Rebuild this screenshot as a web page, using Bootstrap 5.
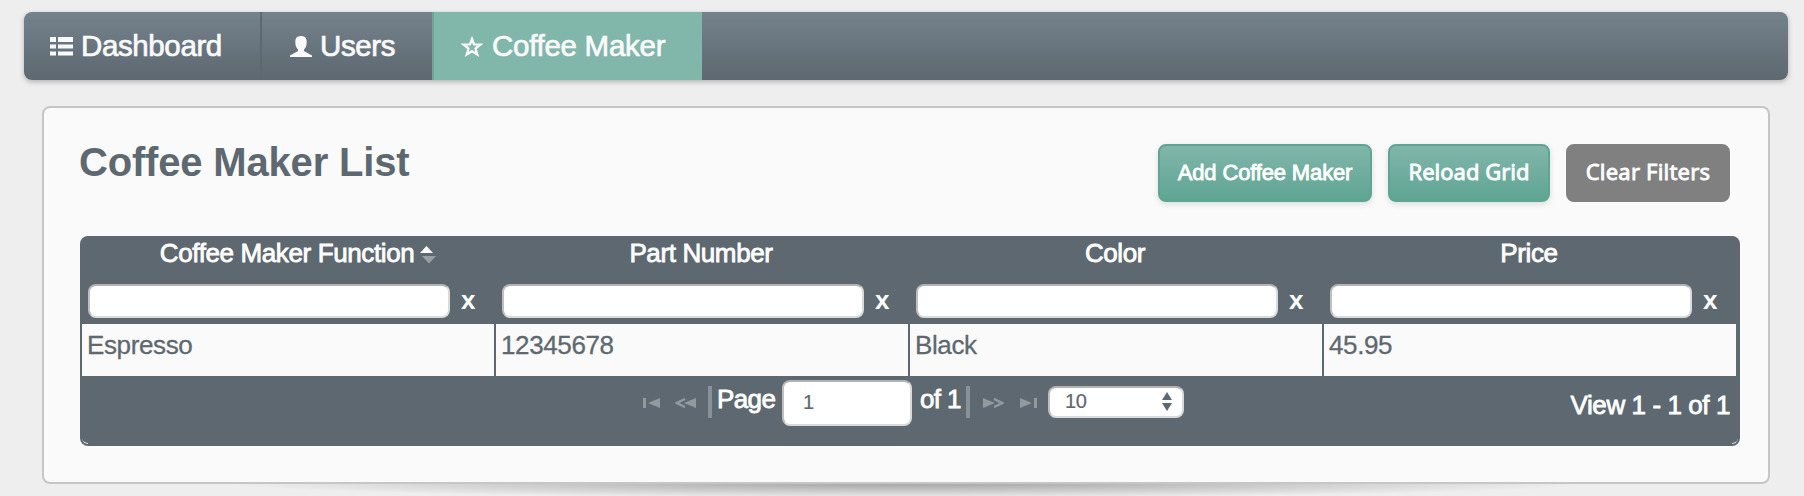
<!DOCTYPE html>
<html lang="en">
<head>
<meta charset="utf-8">
<title>Coffee Maker List</title>
<link href="https://cdn.jsdelivr.net/npm/bootstrap@5.3.0/dist/css/bootstrap.min.css" rel="stylesheet">
<script src="https://cdn.jsdelivr.net/npm/bootstrap@5.3.0/dist/js/bootstrap.bundle.min.js"></script>
<style>
html,body{height:496px;overflow:hidden}
body{background:#eee;font-family:"Liberation Sans",Arial,sans-serif;color:#5d6870;padding:12px 16px 0 24px}
.topbar{height:68px;border-radius:8px;background:linear-gradient(#74828c,#5d6870);box-shadow:0 2px 5px rgba(0,0,0,.25);overflow:hidden;padding:0}
.topbar .nav-link{height:68px;color:#fafafa;font-size:29.5px;letter-spacing:-.38px;line-height:66px;padding:0 0 0 26px;border-right:2px solid #5d6870;-webkit-text-stroke:.7px #fafafa;white-space:nowrap}
.topbar .nav-link svg{margin-right:8px;flex:none}
.topbar .nav-link.w-users{width:170px;padding-left:28px;border-right:0}
.topbar .nav-link.active{background:#81b6aa;border-right:0;border-left:2px solid #70a698;padding-left:27px;letter-spacing:-.28px}
.topbar .nav-link.active svg{margin-right:9px}
.w-dash{width:238px}.w-coffee{width:270px}
.panel{margin:26px 18px 0;height:378px;border:2px solid #c6c6c6;border-radius:8px;background:#fafafa;padding:36px 28px 0 36px}
.panel-wrap{position:relative}
.panel-wrap::after{content:"";position:absolute;z-index:-1;left:200px;right:200px;bottom:-14px;height:30px;background:radial-gradient(closest-side,rgba(0,0,0,.32),rgba(0,0,0,.16) 50%,transparent)}
.panel-title{font-size:40px;font-weight:700;letter-spacing:-.18px;line-height:44px;margin:-4px 0 0 -1px;color:#5d6870}
.actions{margin-right:10px;gap:16px}
.action{height:58px;border-radius:8px;border:2px solid #5fa594;color:#fff;background:linear-gradient(#81b6aa,#5fa594);font-size:22px;line-height:54px;padding:0;box-shadow:0 2px 6px rgba(0,0,0,.12);-webkit-text-stroke:.8px #fff}
.action.add{width:214px;letter-spacing:-.15px}
.action.reload{width:162px;line-height:50px;padding-bottom:4px;font-family:"Noto Sans",sans-serif}
.action.clear{width:164px;line-height:50px;padding-bottom:4px;letter-spacing:.2px;font-family:"Noto Sans",sans-serif;background:#808080;border-color:#808080;box-shadow:none}
.datagrid{margin-top:34px;width:1660px;height:210px;background:#5d6870;border-radius:8px;padding:0 2px;font-size:26px;letter-spacing:-.38px}
.colset{display:grid;grid-template-columns:repeat(4,414px)}
.heads{height:48px;color:#fff;line-height:34px;text-align:center;-webkit-text-stroke:.8px #fff}
.heads>div{padding-right:4px}
.heads .sorted{padding-left:18px;padding-right:0}
.heads .sorted svg{margin-left:-1px}
.filters{height:40px;color:#fff}
.filters>div{padding-left:6px}
.field{border:2px solid #dadada;border-top-color:#b3b3b3;border-left-color:#c0c0c0;border-radius:8px;background:#fff}
.filters .field{width:362px;height:34px;padding:0 8px}
.filters b{margin-left:11px;line-height:32px}
.cells{-webkit-text-stroke:.3px #5d6870}
.cells>div{height:52px;background:#fafafa;border-right:2px solid #5d6870;padding-left:5px;line-height:42px}
.pager{height:70px;color:#fff;position:relative;-webkit-text-stroke:.8px #fff}
.pager::before,.pager::after{content:"";position:absolute;bottom:2px;width:6px;height:6px;border-bottom:1px solid #dfe2e4}
.pager::before{left:0;border-bottom-left-radius:6px}
.pager::after{right:0;border-bottom-right-radius:6px}
.pager .bar{width:4px;height:32px;background:#899198;margin-top:10px}
.pager svg{flex:none}
.pager-mid{padding-left:561px}
.pager-mid .arrow{margin-top:22px}
.lbl{line-height:30px;margin-top:8px;white-space:nowrap;letter-spacing:-.6px}
.pgbox{width:130px;height:46px;color:#5d6870;font-size:20px;padding:0 0 0 19px;line-height:41px;margin-top:4px;-webkit-text-stroke:.2px #5d6870}
.selbox{width:136px;height:32px;color:#5d6870;font-size:20px;line-height:27px;padding:0 10px 0 15px;margin-top:10px;-webkit-text-stroke:.2px #5d6870}
.view{position:absolute;right:8px;top:12px;line-height:34px;letter-spacing:-.42px}
</style>
</head>
<body>
<nav class="topbar nav navbar-expand flex-nowrap">
  <a class="nav-link d-flex align-items-center w-dash" href="#"><svg width="23" height="20" viewBox="0 0 23 20" fill="#fafafa"><path d="M0 1h6v5H0zM8 1h15v5H8zM0 8.500h6v4H0zM8 8.500h15v4H8zM0 15.500h6v4H0zM8 15.500h15v4H8z"/></svg>Dashboard</a>
  <a class="nav-link d-flex align-items-center w-users" href="#"><svg width="22" height="21" viewBox="0 0 22 21" fill="#fafafa"><path d="M11 0c4 0 5.700 2 5.700 6 0 3-.7 5.500-2.700 7.500V15l8 4.500V21H0v-1.500L8 15v-1.500C6 11.500 5.300 9 5.300 6 5.300 2 7 0 11 0z"/></svg>Users</a>
  <a class="nav-link active d-flex align-items-center w-coffee" href="#"><svg width="22" height="21" viewBox="0 0 22 21" fill="none" stroke="#fafafa" stroke-width="2.300"><path d="M11 3l2 5.300 6.500.2-5 4 1.800 6L11 15.200 5.700 18.500l1.800-6-5-4 6.500-.2z"/></svg><span>Coffee Maker</span></a>
</nav>
<div class="panel-wrap">
<main class="panel">
  <div class="d-flex justify-content-between align-items-start">
    <h1 class="panel-title">Coffee Maker List</h1>
    <div class="actions d-flex">
      <button class="btn action add">Add Coffee Maker</button>
      <button class="btn action reload">Reload Grid</button>
      <button class="btn action clear">Clear Filters</button>
    </div>
  </div>
  <section class="datagrid">
    <div class="colset heads">
      <div class="sorted"><span>Coffee Maker Function</span> <svg width="16" height="18" viewBox="0 0 16 18"><path d="M0 7h13L6.500 0z" fill="#fff"/><path d="M2 10h14l-7 7.500z" fill="#9a9fa4"/></svg></div>
      <div>Part Number</div><div>Color</div><div>Price</div>
    </div>
    <div class="colset filters">
      <div class="d-flex"><input class="field"><b>x</b></div>
      <div class="d-flex"><input class="field"><b>x</b></div>
      <div class="d-flex"><input class="field"><b>x</b></div>
      <div class="d-flex"><input class="field"><b>x</b></div>
    </div>
    <div class="colset cells"><div>Espresso</div><div>12345678</div><div>Black</div><div>45.95</div></div>
    <div class="pager">
      <div class="pager-mid d-flex align-items-start">
        <svg class="arrow" width="17" height="10" viewBox="0 0 17 10" fill="#929a9f"><path d="M0 0h3v10H0zM17 0v10L5 5z"/></svg>
        <svg class="arrow" style="margin-left:15px" width="21" height="10" viewBox="0 0 21 10"><path d="M21 0v10L9 5z" fill="#929a9f"/><path d="M10 1L2 5l8 4" fill="none" stroke="#929a9f" stroke-width="2.500"/></svg>
        <div class="bar" style="margin-left:12px"></div>
        <span class="lbl" style="width:64px;margin-left:5px">Page</span>
        <div class="field pgbox" style="margin-left:1px">1</div>
        <span class="lbl" style="width:46px;margin-left:8px">of 1</span>
        <div class="bar"></div>
        <svg class="arrow" style="margin-left:13px" width="21" height="10" viewBox="0 0 21 10"><path d="M0 0v10L12 5z" fill="#929a9f"/><path d="M11 1l8 4-8 4" fill="none" stroke="#929a9f" stroke-width="2.500"/></svg>
        <svg class="arrow" style="margin-left:16px" width="17" height="10" viewBox="0 0 17 10" fill="#929a9f"><path d="M14 0h3v10h-3zM0 0v10L12 5z"/></svg>
        <div class="field selbox d-flex justify-content-between" style="margin-left:11px"><span>10</span><svg class="mt-1" width="10" height="19" viewBox="0 0 10 19" fill="#5d6870"><path d="M0 8h10L5 0zM0 11h10l-5 8z"/></svg></div>
      </div>
      <div class="view">View 1 - 1 of 1</div>
    </div>
  </section>
</main>
</div>
</body>
</html>
